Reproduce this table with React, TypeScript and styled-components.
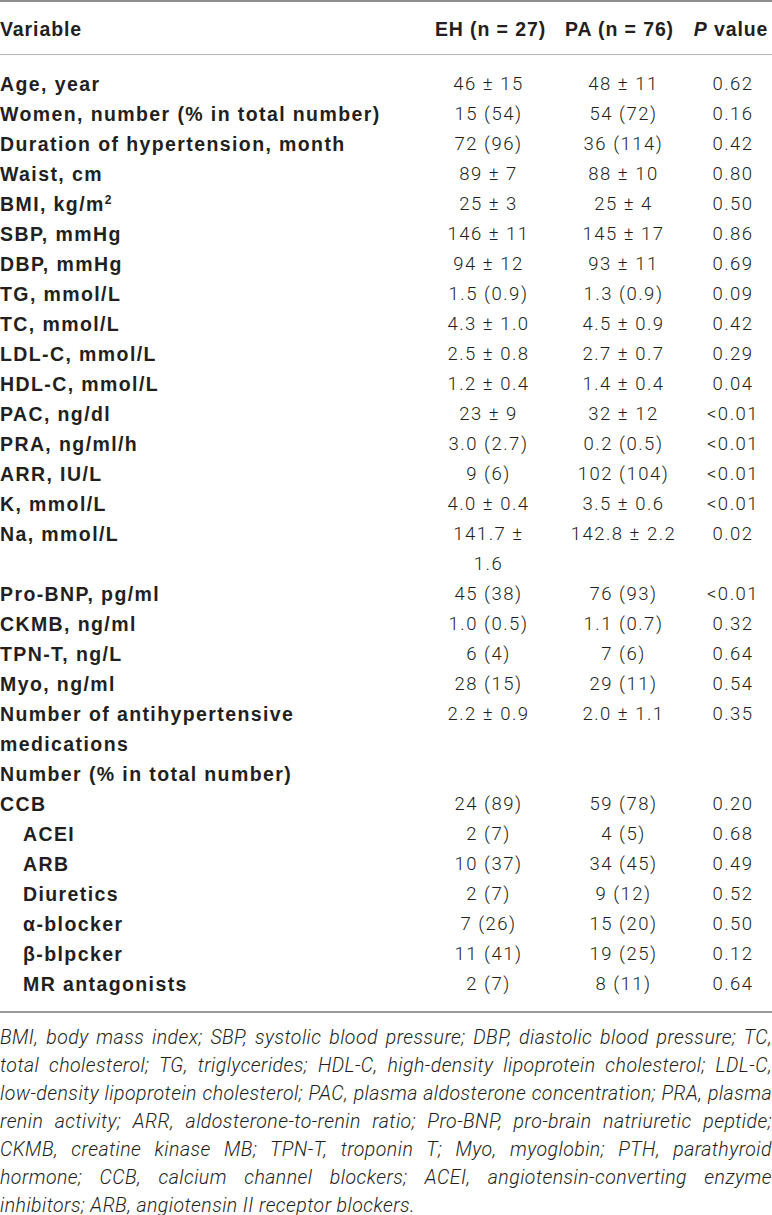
import React from "react";
import styled, {createGlobalStyle} from "styled-components";

const GlobalStyle = createGlobalStyle`
  body {
    margin: 0;
    background: #fff;
    color: #231f20;
    font-family: "Liberation Sans", Arial, sans-serif;
  }
`;

const Page = styled.div`
  width: 772px;
  overflow: hidden;
`;

const Table = styled.table`
  width: 100%;
  border-collapse: collapse;
  table-layout: fixed;
  border-top: 2px solid #8e8e8e;
  border-bottom: 2px solid #9a9a9a;

  tbody tr:first-child td {
    padding-top: 14px;
  }

  tbody tr:last-child td {
    padding-bottom: 12px;
  }
`;

const HeadCell = styled.th<{$align?: string; $pad?: number}>`
  font-size: 19.5px;
  font-weight: 700;
  letter-spacing: 0.9px;
  line-height: 30px;
  white-space: nowrap;
  text-align: ${(p) => p.$align || "center"};
  padding: 12px 0 10px ${(p) => p.$pad || 0}px;
  border-bottom: 1px solid #b4b4b4;
`;

const LabelCell = styled.td<{$indent?: boolean}>`
  font-size: 19.5px;
  font-weight: 700;
  letter-spacing: 1.4px;
  line-height: 30px;
  vertical-align: top;
  padding: 0 0 0 ${(p) => (p.$indent ? "23px" : "0")};
`;

const ValueCell = styled.td`
  font-family: Roboto, "Liberation Sans", sans-serif;
  font-weight: 300;
  font-size: 18.5px;
  letter-spacing: 1.5px;
  line-height: 30px;
  vertical-align: top;
  text-align: center;
  padding: 0 0 0 8px;
`;

const Note = styled.div`
  font-family: Roboto, "Liberation Sans", sans-serif;
  font-weight: 300;
  font-style: italic;
  font-size: 19.5px;
  letter-spacing: 0.45px;
  line-height: 28px;
  padding-top: 11px;
`;

const NoteLine = styled.div<{$last?: boolean}>`
  text-align: justify;
  text-align-last: ${(p) => (p.$last ? "left" : "justify")};
  white-space: nowrap;
`;

type Row = {
    label: React.ReactNode;
    eh?: React.ReactNode;
    pa?: string;
    p?: string;
    indent?: boolean;
};

const rows: Row[] = [
    {label: "Age, year", eh: "46 ± 15", pa: "48 ± 11", p: "0.62"},
    {label: "Women, number (% in total number)", eh: "15 (54)", pa: "54 (72)", p: "0.16"},
    {label: "Duration of hypertension, month", eh: "72 (96)", pa: "36 (114)", p: "0.42"},
    {label: "Waist, cm", eh: "89 ± 7", pa: "88 ± 10", p: "0.80"},
    {label: <>BMI, kg/m<sup style={{fontSize: "12px", lineHeight: 0}}>2</sup></>, eh: "25 ± 3", pa: "25 ± 4", p: "0.50"},
    {label: "SBP, mmHg", eh: "146 ± 11", pa: "145 ± 17", p: "0.86"},
    {label: "DBP, mmHg", eh: "94 ± 12", pa: "93 ± 11", p: "0.69"},
    {label: "TG, mmol/L", eh: "1.5 (0.9)", pa: "1.3 (0.9)", p: "0.09"},
    {label: "TC, mmol/L", eh: "4.3 ± 1.0", pa: "4.5 ± 0.9", p: "0.42"},
    {label: "LDL-C, mmol/L", eh: "2.5 ± 0.8", pa: "2.7 ± 0.7", p: "0.29"},
    {label: "HDL-C, mmol/L", eh: "1.2 ± 0.4", pa: "1.4 ± 0.4", p: "0.04"},
    {label: "PAC, ng/dl", eh: "23 ± 9", pa: "32 ± 12", p: "<0.01"},
    {label: "PRA, ng/ml/h", eh: "3.0 (2.7)", pa: "0.2 (0.5)", p: "<0.01"},
    {label: "ARR, IU/L", eh: "9 (6)", pa: "102 (104)", p: "<0.01"},
    {label: "K, mmol/L", eh: "4.0 ± 0.4", pa: "3.5 ± 0.6", p: "<0.01"},
    {label: "Na, mmol/L", eh: <>141.7 ±<br />1.6</>, pa: "142.8 ± 2.2", p: "0.02"},
    {label: "Pro-BNP, pg/ml", eh: "45 (38)", pa: "76 (93)", p: "<0.01"},
    {label: "CKMB, ng/ml", eh: "1.0 (0.5)", pa: "1.1 (0.7)", p: "0.32"},
    {label: "TPN-T, ng/L", eh: "6 (4)", pa: "7 (6)", p: "0.64"},
    {label: "Myo, ng/ml", eh: "28 (15)", pa: "29 (11)", p: "0.54"},
    {label: <>Number of antihypertensive<br />medications</>, eh: "2.2 ± 0.9", pa: "2.0 ± 1.1", p: "0.35"},
    {label: "Number (% in total number)"},
    {label: "CCB", eh: "24 (89)", pa: "59 (78)", p: "0.20"},
    {label: "ACEI", eh: "2 (7)", pa: "4 (5)", p: "0.68", indent: true},
    {label: "ARB", eh: "10 (37)", pa: "34 (45)", p: "0.49", indent: true},
    {label: "Diuretics", eh: "2 (7)", pa: "9 (12)", p: "0.52", indent: true},
    {label: "α-blocker", eh: "7 (26)", pa: "15 (20)", p: "0.50", indent: true},
    {label: "β-blpcker", eh: "11 (41)", pa: "19 (25)", p: "0.12", indent: true},
    {label: "MR antagonists", eh: "2 (7)", pa: "8 (11)", p: "0.64", indent: true},
];

const noteLines = [
    "BMI, body mass index; SBP, systolic blood pressure; DBP, diastolic blood pressure; TC,",
    "total cholesterol; TG, triglycerides; HDL-C, high-density lipoprotein cholesterol; LDL-C,",
    "low-density lipoprotein cholesterol; PAC, plasma aldosterone concentration; PRA, plasma",
    "renin activity; ARR, aldosterone-to-renin ratio; Pro-BNP, pro-brain natriuretic peptide;",
    "CKMB, creatine kinase MB; TPN-T, troponin T; Myo, myoglobin; PTH, parathyroid",
    "hormone; CCB, calcium channel blockers; ACEI, angiotensin-converting enzyme",
    "inhibitors; ARB, angiotensin II receptor blockers.",
];

const App = () => {
    return (
        <Page>
            <GlobalStyle />
            <Table>
                <colgroup>
                    <col style={{width: 416}} />
                    <col style={{width: 137}} />
                    <col style={{width: 133}} />
                    <col style={{width: 86}} />
                </colgroup>
                <thead>
                    <tr>
                        <HeadCell $align="left">Variable</HeadCell>
                        <HeadCell $pad={12}>EH (n = 27)</HeadCell>
                        <HeadCell>PA (n = 76)</HeadCell>
                        <HeadCell $pad={4}><i>P</i> value</HeadCell>
                    </tr>
                </thead>
                <tbody>
                    {rows.map((row, i) => (
                        <tr key={i}>
                            <LabelCell $indent={row.indent}>{row.label}</LabelCell>
                            <ValueCell>{row.eh}</ValueCell>
                            <ValueCell>{row.pa}</ValueCell>
                            <ValueCell>{row.p}</ValueCell>
                        </tr>
                    ))}
                </tbody>
            </Table>
            <Note>
                {noteLines.map((line, i) => (
                    <NoteLine key={i} $last={i === noteLines.length - 1}>{line}</NoteLine>
                ))}
            </Note>
        </Page>
    );
};

export default App;
